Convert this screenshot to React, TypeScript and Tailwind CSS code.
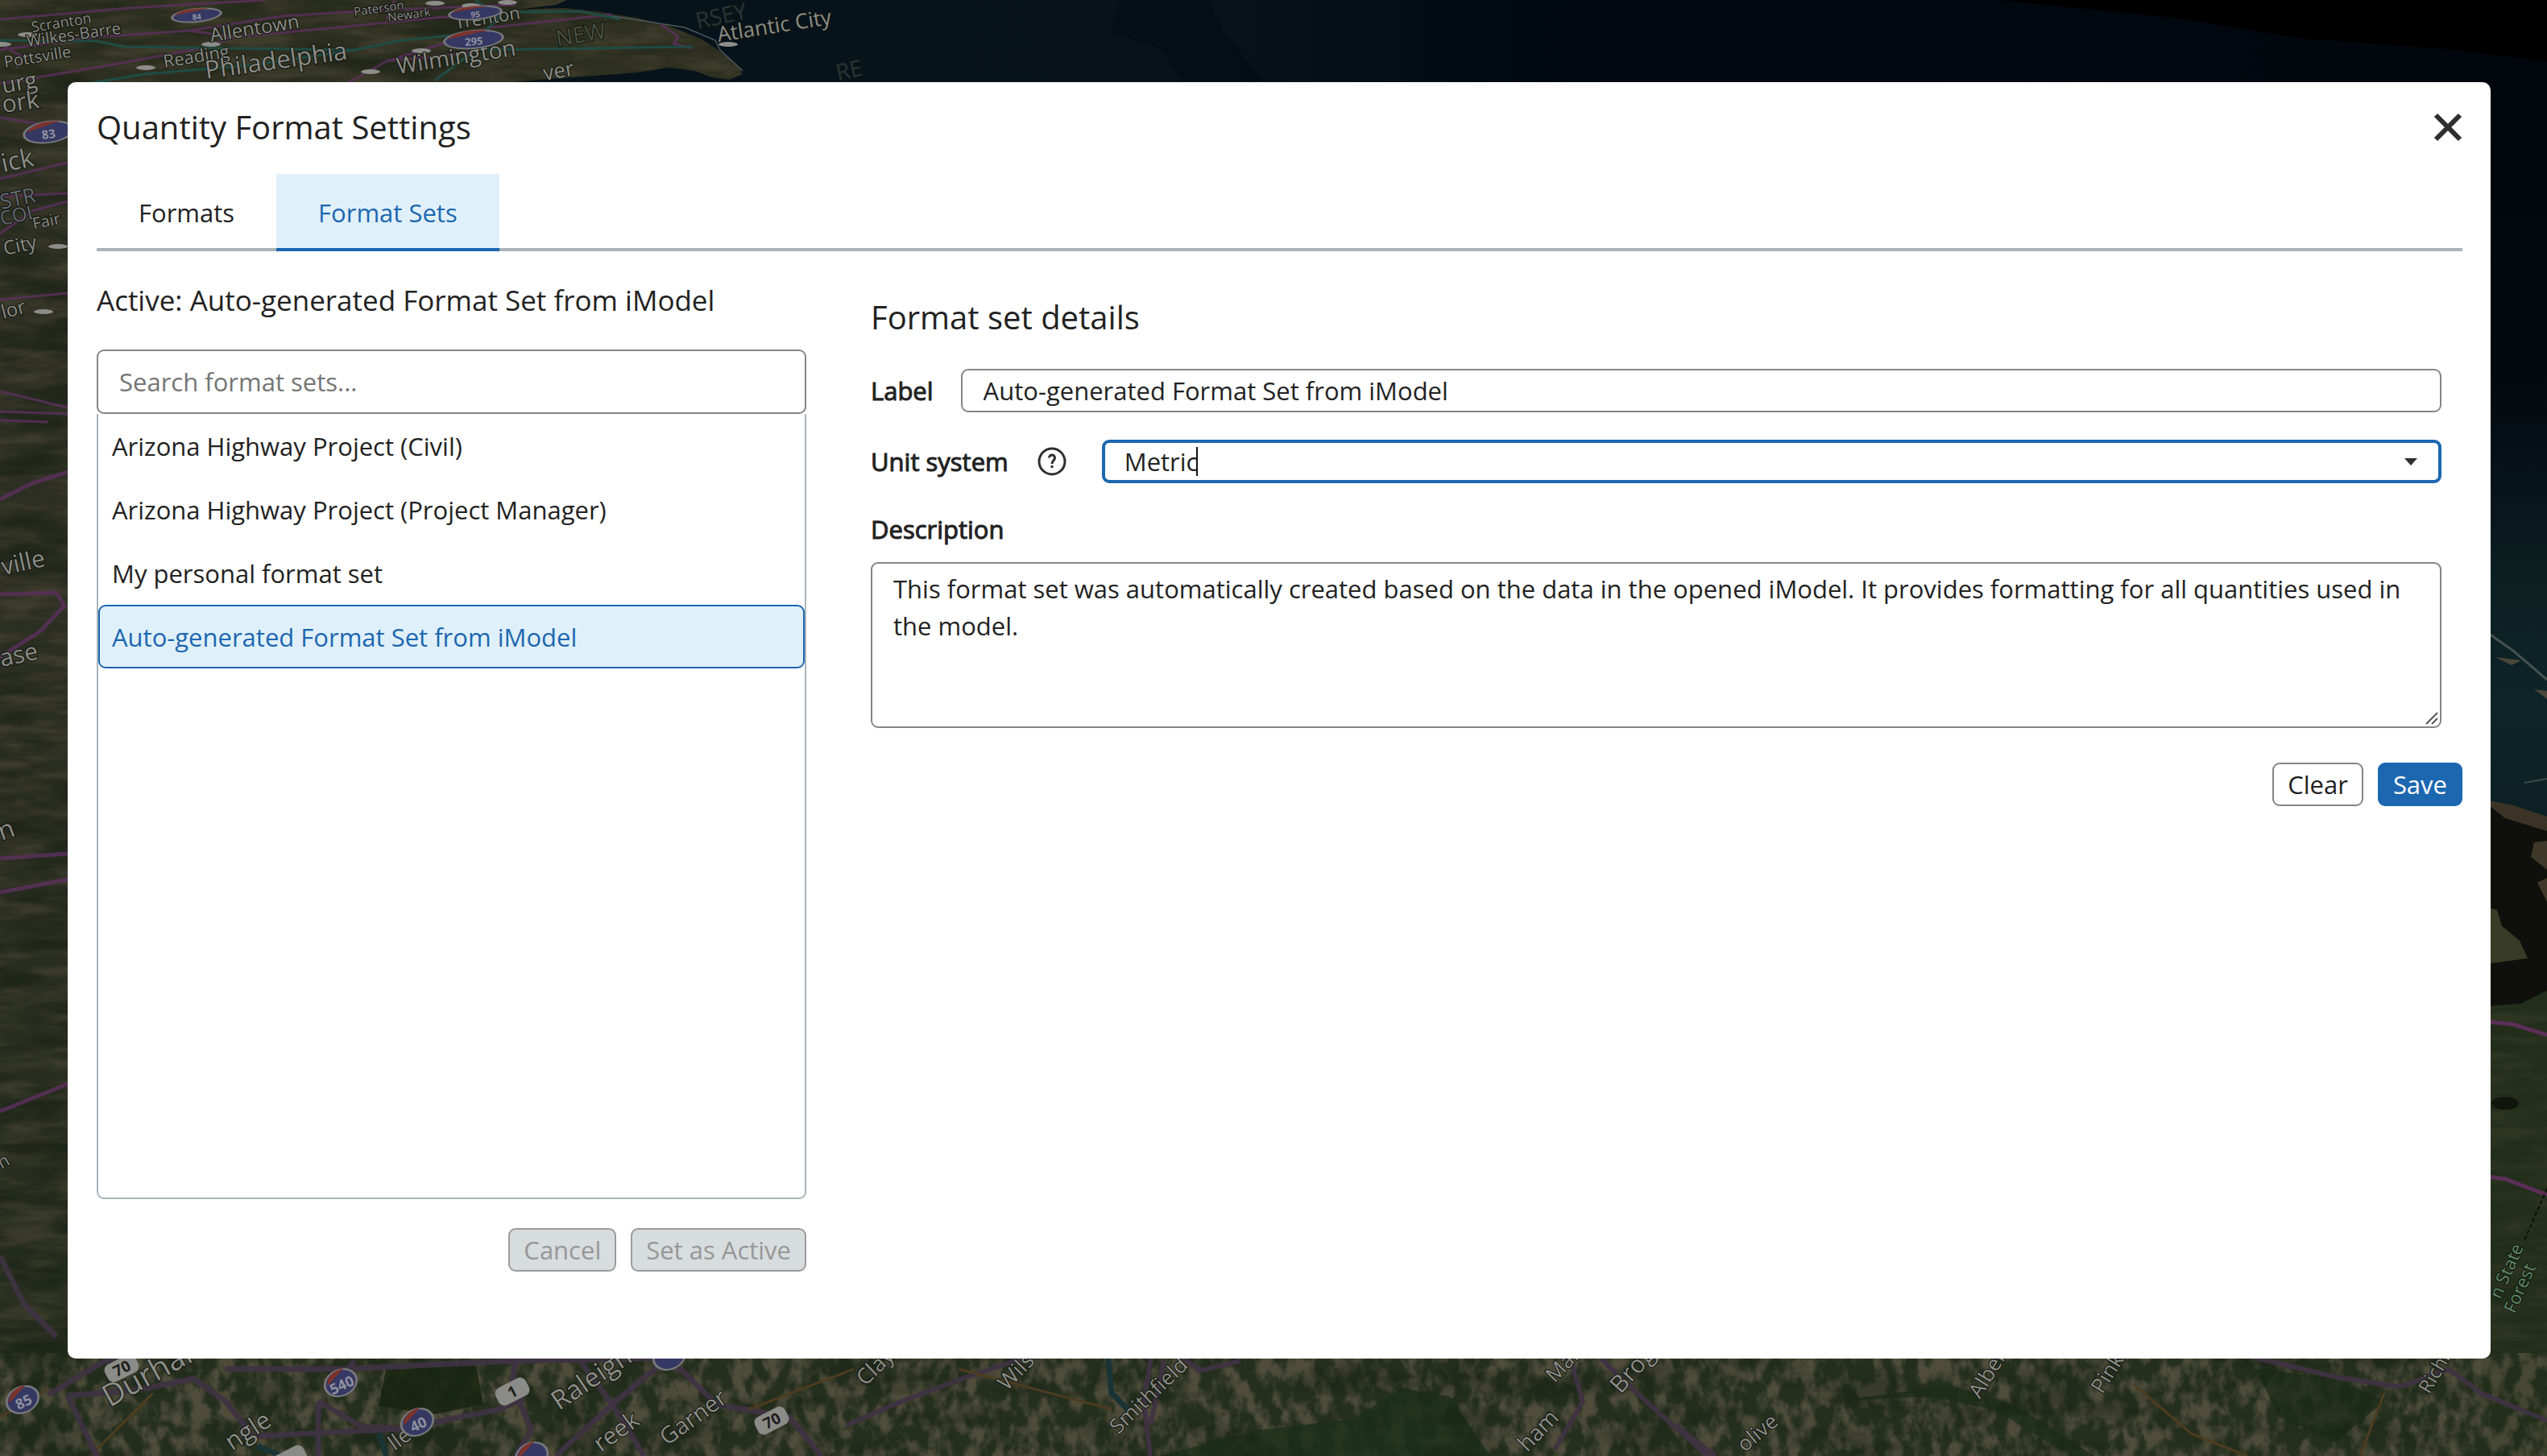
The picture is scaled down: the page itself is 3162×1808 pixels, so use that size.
import { useState } from "react";
import type { ReactNode } from "react";

type Label = { x: number; y: number; r: number; s: number; t: string; c?: string };

const mapLabels: Label[] = [
  { x: 40, y: 40, r: -9, s: 18, t: "Scranton" },
  { x: 34, y: 58, r: -8, s: 20, t: "Wilkes-Barre" },
  { x: 6, y: 84, r: -9, s: 20, t: "Pottsville" },
  { x: 204, y: 84, r: -9, s: 22, t: "Reading" },
  { x: 262, y: 52, r: -9, s: 24, t: "Allentown" },
  { x: 256, y: 98, r: -8, s: 31, t: "Philadelphia" },
  { x: 440, y: 20, r: -8, s: 15, t: "Paterson" },
  { x: 482, y: 27, r: -8, s: 15, t: "Newark" },
  { x: 566, y: 36, r: -9, s: 22, t: "Trenton" },
  { x: 494, y: 92, r: -9, s: 28, t: "Wilmington" },
  { x: 692, y: 58, r: -10, s: 28, t: "NEW", c: "#49503f" },
  { x: 866, y: 36, r: -12, s: 28, t: "RSEY", c: "#26343a" },
  { x: 892, y: 52, r: -9, s: 26, t: "Atlantic City" },
  { x: 676, y: 100, r: -10, s: 26, t: "ver" },
  { x: 1040, y: 100, r: -12, s: 28, t: "RE", c: "#26343a" },
  { x: 4, y: 116, r: -10, s: 28, t: "urg" },
  { x: 4, y: 140, r: -8, s: 30, t: "ork" },
  { x: 4, y: 214, r: -12, s: 32, t: "ick" },
  { x: 2, y: 260, r: -12, s: 26, t: "STR", c: "#646b72" },
  { x: 2, y: 280, r: -12, s: 24, t: "COL", c: "#646b72" },
  { x: 42, y: 285, r: -12, s: 20, t: "Fair" },
  { x: 6, y: 317, r: -12, s: 24, t: "City" },
  { x: 4, y: 396, r: -15, s: 24, t: "lor" },
  { x: 4, y: 714, r: -12, s: 30, t: "ville" },
  { x: 2, y: 828, r: -12, s: 30, t: "ase" },
  { x: 2, y: 1044, r: -20, s: 32, t: "n" },
  { x: 2, y: 1452, r: -30, s: 22, t: "n" },
  { x: 136, y: 1748, r: -29, s: 38, t: "Durham" },
  { x: 694, y: 1752, r: -34, s: 33, t: "Raleigh" },
  { x: 828, y: 1796, r: -36, s: 29, t: "Garner" },
  { x: 288, y: 1802, r: -33, s: 31, t: "ngle" },
  { x: 746, y: 1804, r: -36, s: 30, t: "reek" },
  { x: 490, y: 1802, r: -36, s: 26, t: "lle" },
  { x: 1074, y: 1722, r: -44, s: 27, t: "Clayto" },
  { x: 1250, y: 1728, r: -46, s: 27, t: "Wilson" },
  { x: 1388, y: 1782, r: -44, s: 26, t: "Smithfield" },
  { x: 1930, y: 1718, r: -46, s: 26, t: "Mar-" },
  { x: 2012, y: 1732, r: -48, s: 30, t: "Brogd" },
  { x: 1896, y: 1804, r: -46, s: 28, t: "ham" },
  { x: 2458, y: 1738, r: -58, s: 26, t: "Alberts" },
  { x: 2610, y: 1732, r: -58, s: 26, t: "Pink H" },
  { x: 2166, y: 1804, r: -40, s: 26, t: "olive" },
  { x: 3016, y: 1732, r: -60, s: 24, t: "Richla" },
  { x: 3104, y: 1614, r: -66, s: 22, t: "n State", c: "#5f8a68" },
  { x: 3122, y: 1632, r: -66, s: 22, t: "Forest", c: "#5f8a68" },
];

const interstates = [
  { x: 244, y: 19, t: "84", w: 32, h: 9, r: -6 },
  { x: 590, y: 16, t: "95", w: 34, h: 9, r: -5 },
  { x: 588, y: 49, t: "295", w: 38, h: 12, r: -5 },
  { x: 60, y: 164, t: "83", w: 32, h: 14, r: -8 },
  { x: 28, y: 1738, t: "85", w: 22, h: 17, r: -25 },
  { x: 423, y: 1717, t: "540", w: 22, h: 17, r: -25 },
  { x: 518, y: 1766, t: "40", w: 22, h: 17, r: -25 },
  { x: 831, y: 1684, t: "", w: 22, h: 17, r: -25 },
  { x: 660, y: 1808, t: "", w: 22, h: 17, r: -25 },
];

const routes = [
  { x: 151, y: 1699, t: "70" },
  { x: 636, y: 1728, t: "1" },
  { x: 958, y: 1764, t: "70" },
  { x: 360, y: 1812, t: "" },
];

const towns = [
  [34, 43], [2, 55], [262, 55], [181, 84], [523, 63], [460, 89], [904, 55], [540, 4], [585, 7], [630, 3], [72, 306], [54, 387],
];

function MapBackdrop() {
  return (
    <svg
      className="absolute inset-0 h-full w-full"
      viewBox="0 0 3162 1808"
      preserveAspectRatio="xMidYMid slice"
      aria-hidden="true"
    >
      <defs>
        <linearGradient id="sea" x1="0" y1="0" x2="1" y2="0">
          <stop offset="0" stopColor="#07141b" />
          <stop offset="0.48" stopColor="#07121a" />
          <stop offset="0.6" stopColor="#020a11" />
          <stop offset="1" stopColor="#01060c" />
        </linearGradient>
        <linearGradient id="eastSea" x1="0" y1="0" x2="0" y2="1">
          <stop offset="0" stopColor="#01060c" />
          <stop offset="0.35" stopColor="#03090d" />
          <stop offset="0.5" stopColor="#07131a" />
          <stop offset="0.62" stopColor="#0c1f20" />
          <stop offset="0.8" stopColor="#0d2429" />
          <stop offset="1" stopColor="#0d2023" />
        </linearGradient>
        <linearGradient id="west" x1="0" y1="0" x2="0" y2="1">
          <stop offset="0" stopColor="#2f3024" />
          <stop offset="0.5" stopColor="#2b2e22" />
          <stop offset="1" stopColor="#252e1e" />
        </linearGradient>
        <filter id="streaks" x="0" y="0" width="100%" height="100%" colorInterpolationFilters="sRGB">
          <feTurbulence type="fractalNoise" baseFrequency="0.014 0.07" numOctaves="4" seed="4" />
          <feColorMatrix values="0 0 0 0 0.29  0 0 0 0 0.27  0 0 0 0 0.20  3 0 0 0 -1.2" />
        </filter>
        <filter id="shade" x="0" y="0" width="100%" height="100%" colorInterpolationFilters="sRGB">
          <feTurbulence type="fractalNoise" baseFrequency="0.008 0.03" numOctaves="4" seed="11" />
          <feColorMatrix values="0 0 0 0 0.09  0 0 0 0 0.13  0 0 0 0 0.08  0 4 0 0 -1.9" />
        </filter>
        <filter id="fields" x="0" y="0" width="100%" height="100%" colorInterpolationFilters="sRGB">
          <feTurbulence type="fractalNoise" baseFrequency="0.055 0.035" numOctaves="4" seed="7" />
          <feColorMatrix values="0 0 0 0 0.38  0 0 0 0 0.35  0 0 0 0 0.28  4 0 0 0 -1.65" />
        </filter>
        <clipPath id="northLand">
          <path d="M0 0H704L690 6 640 12 700 10 740 14 790 22 830 32 870 48 892 62 916 82 922 92 905 99 884 96 862 88 830 84 790 90 740 94 680 98 620 104H0Z" />
        </clipPath>
      </defs>

      <rect width="3162" height="1808" fill="url(#sea)" />
      <path d="M1390 0 1380 40 1440 60 1470 104H1570L1520 40 1500 0Z" fill="#02090d" opacity="0.5" />
      <path d="M2480 0H3162V76L3030 60 2860 48 2700 22Z" fill="#000" />

      {/* land north and west of the coast */}
      <g clipPath="url(#northLand)">
        <rect width="940" height="110" fill="#2d2f20" />
        <rect width="940" height="110" filter="url(#streaks)" opacity="0.6" />
        <rect width="940" height="110" filter="url(#shade)" opacity="0.5" />
      </g>
      <path d="M760 20 850 34 888 50 894 62 922 88" fill="none" stroke="#4c5a5c" strokeWidth="1.5" />
      <g>
        <rect y="100" width="110" height="1708" fill="url(#west)" />
        <rect y="100" width="110" height="1708" filter="url(#streaks)" opacity="0.6" />
        <rect y="100" width="110" height="1708" filter="url(#shade)" opacity="0.6" />
      </g>

      {/* southern farmland */}
      <g>
        <rect y="1680" width="3162" height="128" fill="#252f1e" />
        <rect y="1680" width="3162" height="128" filter="url(#fields)" opacity="0.7" />
        <path d="M480 1696 590 1690 600 1744 540 1756 470 1746Z" fill="#17240f" opacity="0.85" />
        <path d="M1440 1808 1560 1776 1680 1762 1740 1724 1800 1734 1850 1808Z" fill="#1b2f18" opacity="0.8" />
        <path d="M2280 1740 2420 1720 2500 1744 2600 1808 2570 1808 2480 1752 2400 1734Z" fill="#1a2c16" opacity="0.7" />
        <path d="M2800 1700 2900 1712 2960 1740 2900 1790 2830 1760Z" fill="#182a15" opacity="0.7" />
        <rect y="1680" width="3162" height="128" filter="url(#shade)" opacity="0.4" />
      </g>

      {/* eastern shoreline */}
      <g>
        <rect x="3080" y="140" width="82" height="920" fill="url(#eastSea)" />
        <path d="M3080 780 3120 808 3162 844" fill="none" stroke="#46514f" strokeWidth="3" />
        <path d="M3098 816 3130 820 3118 826ZM3146 856 3162 858V868Z" fill="#4a473a" />
        <path d="M3134 972 3162 967" stroke="#3e4a48" strokeWidth="2" />
        <path d="M3080 990 3162 1018V1808H3080Z" fill="#0f100d" />
        <path d="M3080 992 3120 1000 3162 1014V1032L3110 1016Z" fill="#3b3426" />
        <path d="M3146 1046 3162 1044V1080L3142 1064ZM3150 1096 3162 1090V1120Z" fill="#3f3828" />
        <path d="M3080 1125 3100 1130 3106 1150 3128 1168 3138 1190 3080 1198Z" fill="#383b26" />
        <path d="M3080 1250 3130 1246 3162 1230V1808H3080Z" fill="#222e1a" />
        <rect x="3080" y="1250" width="82" height="440" filter="url(#streaks)" opacity="0.3" />
        <rect x="3080" y="1680" width="82" height="128" filter="url(#fields)" opacity="0.6" />
        <ellipse cx="3110" cy="1370" rx="17" ry="8" fill="#11150c" />
        <path d="M3080 1268 3120 1272 3162 1285M3080 1460 3110 1464 3162 1484" fill="none" stroke="#5b2f57" strokeWidth="5" />
        <path d="M3162 1476 3134 1540" stroke="#0c0f0a" strokeWidth="2" strokeDasharray="5 3" />
      </g>

      {/* highways */}
      <g fill="none" strokeLinejoin="round">
        <g stroke="#59305a" strokeWidth="3" opacity="0.85">
          <path d="M0 24 160 10 330 0M0 62 120 46 235 38 350 20 480 12 640 6M235 38 290 46 250 60 130 82 0 104M290 46 400 36 540 22 600 18" />
          <path d="M430 104 480 76 550 54 610 34 760 18M480 76 520 72 590 64M490 0 480 24M820 30 842 46 836 54 860 60M0 54 30 72 20 84" />
          <path d="M0 146 50 154 84 158M0 222 84 202M0 244 84 240M0 290 40 262 84 250M0 372 84 364M0 486 84 506M0 511 84 514M0 522 60 524" />
          <path d="M0 620 40 600 84 586M0 738 70 736 80 752 50 784 0 816M0 1066 84 1060M0 1108 84 1092M0 1380 84 1346" strokeWidth="5" />
        </g>
        <g stroke="#1f4c44" strokeWidth="3">
          <path d="M0 50 120 51 155 58 440 62 500 50 600 40 620 22 590 0M440 62 320 80 180 92 84 108M540 100 590 62 860 58M640 15 720 14 770 24" />
        </g>
        <g stroke="#3f3342" strokeWidth="7" opacity="0.95">
          <path d="M84 1733 170 1726 240 1712 280 1740 310 1778 305 1784 500 1774 620 1750 650 1736M84 1733 120 1808M60 1732 130 1690 160 1680" />
          <path d="M280 1700 420 1700 640 1690 830 1686 890 1744 980 1760 1020 1808M640 1690 636 1720 660 1776 640 1808M830 1686 760 1744 690 1808M720 1690 760 1744 800 1808M395 1740 450 1772 500 1774M395 1740V1808M440 1690 420 1718M0 1560 30 1620 70 1660" />
          <path d="M1050 1770 1120 1740 1200 1710 1260 1690 1300 1680M1430 1680 1420 1740 1428 1808M1445 1690 1428 1770M1460 1680 1490 1702 1540 1690M1950 1690 1965 1740 1930 1800M1980 1680 2030 1728 2120 1808" strokeWidth="6" />
          <path d="M2800 1686 2900 1710 2980 1722 3040 1700 3080 1730 3162 1764M2080 1770 2130 1808" strokeWidth="6" />
        </g>
        <path d="M0 1760 60 1724M120 1800 190 1730M930 1750 1060 1700M2650 1720 2720 1780 2790 1808M2960 1730 2930 1808M1190 1700 1380 1750" stroke="#4d3c20" strokeWidth="3" />
        <path d="M1375 1680 1380 1730 1400 1750M320 1796 350 1808M470 1780 480 1808" stroke="#1a3436" strokeWidth="7" />
      </g>

      {towns.map(([x, y]) => (
        <ellipse key={`${x}-${y}`} cx={x} cy={y} rx="12" ry="3" fill="#8d8d8a" />
      ))}

      {mapLabels.map((l) => (
        <text
          key={`${l.t}-${l.x}-${l.y}`}
          x={l.x}
          y={l.y}
          fontFamily="'Open Sans', sans-serif"
          fontSize={l.s}
          fill={l.c ?? "#8c8d87"}
          stroke="#10140e"
          strokeWidth="2"
          paintOrder="stroke"
          transform={`rotate(${l.r} ${l.x} ${l.y})`}
        >
          {l.t}
        </text>
      ))}

      {interstates.map((s) => (
        <g key={`${s.x}-${s.y}`} transform={`translate(${s.x} ${s.y}) rotate(${s.r})`}>
          <ellipse rx={s.w} ry={s.h} fill="#77777c" />
          <ellipse rx={s.w - 3} ry={s.h - 2} fill="#343862" />
          <path d={`M${-s.w + 5} -3Q${-s.w / 2} ${-s.h - 2} ${s.w / 2} ${-s.h + 2}Z`} fill="#7c332d" />
          {s.t && (
            <text
              y={s.h / 2 + 1}
              textAnchor="middle"
              fontFamily="'Open Sans', sans-serif"
              fontWeight="700"
              fontSize={s.h + 1}
              fill="#8f90a0"
            >
              {s.t}
            </text>
          )}
        </g>
      ))}

      {routes.map((s) => (
        <g key={`${s.x}-${s.y}`} transform={`translate(${s.x} ${s.y}) rotate(-27)`}>
          <rect x="-21" y="-12" width="42" height="24" rx="8" fill="#8b8b88" />
          {s.t && (
            <text
              y="7"
              textAnchor="middle"
              fontFamily="'Open Sans', sans-serif"
              fontWeight="700"
              fontSize="19"
              fill="#1e1e1c"
            >
              {s.t}
            </text>
          )}
        </g>
      ))}
    </svg>
  );
}

function CloseIcon() {
  return (
    <svg className="size-9" viewBox="0 0 36 36" aria-hidden="true">
      <path d="M3 3 33 33M33 3 3 33" stroke="#2e2e2e" strokeWidth="6" />
    </svg>
  );
}

function HelpIcon() {
  return (
    <svg className="size-9" viewBox="0 0 36 36" fill="none" stroke="#2e2e2e" aria-hidden="true">
      <circle cx="18" cy="18" r="16" strokeWidth="3" />
      <path d="M14.5 13.5C14.5 8.8 21.5 8.8 21.5 13.5C21.5 16.6 18 17 18 21" strokeWidth="3" />
      <rect x="16.5" y="23" width="3" height="3" fill="#2e2e2e" stroke="none" />
    </svg>
  );
}

function Button({
  children,
  kind = "default",
  disabled = false,
}: {
  children: ReactNode;
  kind?: "default" | "primary";
  disabled?: boolean;
}) {
  const look = disabled
    ? "border-[#9b9b9b] bg-[#d7dcde] text-[#979797]"
    : kind === "primary"
      ? "border-[#1c67b0] bg-[#1c67b0] text-white"
      : "border-[#858585] bg-white text-[#222]";
  return (
    <button
      type="button"
      disabled={disabled}
      className={`h-[54px] rounded-[9px] border-2 px-[17px] text-[31px] leading-[48px] ${look}`}
    >
      {children}
    </button>
  );
}

const formatSets = [
  "Arizona Highway Project (Civil)",
  "Arizona Highway Project (Project Manager)",
  "My personal format set",
  "Auto-generated Format Set from iModel",
];

export default function App() {
  const [selected, setSelected] = useState(3);
  const [label, setLabel] = useState("Auto-generated Format Set from iModel");
  const [unit, setUnit] = useState("Metric");
  const [description, setDescription] = useState(
    "This format set was automatically created based on the data in the opened iModel. It provides formatting for all quantities used in the model.",
  );

  return (
    <div className="relative flex min-h-screen flex-col overflow-hidden bg-[#01060c] pt-[102px] pr-[70px] pb-[121px] pl-[84px] font-['Open_Sans',sans-serif] text-[31px] leading-[46px] text-[#222]">
      <MapBackdrop />
      <section
        role="dialog"
        aria-labelledby="dialog-title"
        className="relative flex flex-1 flex-col rounded-[10px] bg-white pt-6 pr-[35px] pb-[108px] pl-9"
      >
        <header className="flex h-16 items-center justify-between">
          <h1 id="dialog-title" className="text-[40px] leading-[56px]">
            Quantity Format Settings
          </h1>
          <button type="button" aria-label="Close" className="p-0">
            <CloseIcon />
          </button>
        </header>

        <div role="tablist" className="mt-[26px] flex h-24 border-b-4 border-[#a9b4ba]">
          <button type="button" role="tab" aria-selected="false" className="h-24 border-b-4 border-transparent px-[52px] pt-1">
            Formats
          </button>
          <button
            type="button"
            role="tab"
            aria-selected="true"
            className="h-24 border-b-4 border-[#1c67b0] bg-[#e0f0fa] px-[52px] pt-1 text-[#1c67b0]"
          >
            Format Sets
          </button>
        </div>

        <div className="flex flex-1 gap-20">
          <div className="flex w-[881px] shrink-0 flex-col pt-9">
            <h2 className="text-[35px] leading-[50px]">Active: Auto-generated Format Set from iModel</h2>
            <input
              type="search"
              aria-label="Search format sets"
              placeholder="Search format sets..."
              className="mt-9 h-20 rounded-[9px] border-2 border-[#858585] bg-white px-[26px] outline-none placeholder:text-[#757575]"
            />
            <ul
              role="listbox"
              aria-label="Format sets"
              className="flex-1 rounded-b-[9px] border-2 border-t-0 border-[#aab5bb]"
            >
              {formatSets.map((name, i) => (
                <li key={name} role="option" aria-selected={i === selected}>
                  <button
                    type="button"
                    onClick={() => setSelected(i)}
                    className={`h-[79px] w-full rounded-[9px] border-2 px-[15px] text-left ${
                      i === selected ? "border-[#1c67b0] bg-[#e0f0fa] text-[#1c67b0]" : "border-transparent"
                    }`}
                  >
                    {name}
                  </button>
                </li>
              ))}
            </ul>
            <div className="mt-9 flex justify-end gap-[18px]">
              <Button disabled>Cancel</Button>
              <Button disabled>Set as Active</Button>
            </div>
          </div>

          <form className="flex min-w-0 flex-1 flex-col pt-[54px]" onSubmit={(e) => e.preventDefault()}>
            <div className="flex flex-col pr-[26px]">
              <h2 className="text-[40px] leading-[56px]">Format set details</h2>
              <div className="mt-9 flex items-center gap-[34px]">
                <label htmlFor="set-label" className="[-webkit-text-stroke:1px]">
                  Label
                </label>
                <input
                  id="set-label"
                  value={label}
                  onChange={(e) => setLabel(e.target.value)}
                  className="h-[54px] min-w-0 flex-1 rounded-[9px] border-2 border-[#858585] bg-white px-[26px] outline-none"
                />
              </div>
              <div className="mt-[34px] flex items-center">
                <label htmlFor="unit-system" className="[-webkit-text-stroke:1px]">
                  Unit system
                </label>
                <button type="button" aria-label="About unit systems" className="mx-9">
                  <HelpIcon />
                </button>
                <div className="ml-2 flex h-[54px] min-w-0 flex-1 items-center rounded-[9px] border-4 border-[#1c67b0] bg-white pr-[26px] pl-6">
                  <input
                    id="unit-system"
                    role="combobox"
                    aria-expanded="false"
                    value={unit}
                    onChange={(e) => setUnit(e.target.value)}
                    className="[field-sizing:content] h-[46px] outline-none"
                  />
                  <span className="-ml-0.5 h-9 w-0.5 bg-[#111]" />
                  <svg className="ml-auto h-[9px] w-4" viewBox="0 0 16 9" aria-hidden="true">
                    <path d="M0 0H16L8 9Z" fill="#2e2e2e" />
                  </svg>
                </div>
              </div>
              <label htmlFor="set-description" className="mt-[34px] [-webkit-text-stroke:1px]">
                Description
              </label>
              <div className="relative mt-[18px] flex">
                <textarea
                  id="set-description"
                  value={description}
                  onChange={(e) => setDescription(e.target.value)}
                  className="h-[206px] flex-1 resize-y rounded-[9px] border-2 border-[#858585] bg-white px-[26px] py-2 outline-none [&::-webkit-resizer]:hidden"
                />
                <svg className="pointer-events-none absolute right-1 bottom-1 size-4" viewBox="0 0 16 16" aria-hidden="true">
                  <path d="M1 15 15 1M8 15 15 8" stroke="#555" strokeWidth="2" />
                </svg>
              </div>
            </div>
            <div className="mt-[43px] flex justify-end gap-[18px]">
              <Button>Clear</Button>
              <Button kind="primary">Save</Button>
            </div>
          </form>
        </div>
      </section>
    </div>
  );
}
